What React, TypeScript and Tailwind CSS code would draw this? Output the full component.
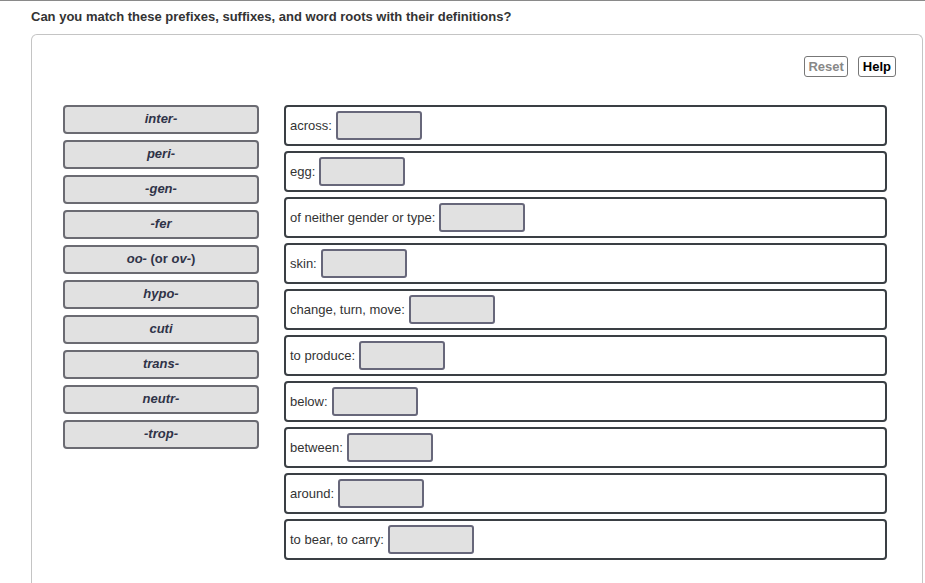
import React from 'react'

const TERMS: React.ReactNode[] = [
  <i>inter-</i>,
  <i>peri-</i>,
  <i>-gen-</i>,
  <i>-fer</i>,
  <>
    <i>oo-</i> (or <i>ov-</i>)
  </>,
  <i>hypo-</i>,
  <i>cuti</i>,
  <i>trans-</i>,
  <i>neutr-</i>,
  <i>-trop-</i>,
]

const DEFS = [
  'across:',
  'egg:',
  'of neither gender or type:',
  'skin:',
  'change, turn, move:',
  'to produce:',
  'below:',
  'between:',
  'around:',
  'to bear, to carry:',
]

export default function App() {
  return (
    <div
      className="min-h-[583px] bg-white border-t border-[#8a8a8a] text-[#333]"
      style={{ fontFamily: '"Liberation Sans", Arial, sans-serif' }}
    >
      <h1 className="pl-[31px] pt-[8px] text-[13px] font-bold leading-[16px]">
        Can you match these prefixes, suffixes, and word roots with their definitions?
      </h1>

      <div className="ml-[31px] mr-[2px] mt-[9px] h-[560px] rounded-tl-[6px] rounded-tr-[6px] border border-b-0 border-[#c4c4c4]">
        {/* toolbar */}
        <div className="flex justify-end gap-[10px] pt-[21px] pr-[26px]">
          <button className="h-[21px] px-[3px] rounded-[3px] border border-[#777] text-[13px] font-bold text-[#888] leading-[17px]">
            Reset
          </button>
          <button className="h-[21px] px-[4px] rounded-[3px] border border-[#777] text-[13px] font-bold text-black leading-[17px]">
            Help
          </button>
        </div>

        <div className="flex gap-[25px] pl-[31px] pt-[28px]">
          {/* draggable terms */}
          <div className="flex w-[196px] flex-col gap-[6px]">
            {TERMS.map((t, i) => (
              <div
                key={i}
                className="flex h-[29px] items-center justify-center rounded-[4px] border-2 border-[#6b6b72] bg-[#e1e1e1] text-[13px] font-bold text-[#2f3348] pb-[1px]"
              >
                <span>{t}</span>
              </div>
            ))}
          </div>

          {/* drop targets */}
          <div className="flex w-[603px] flex-col gap-[5px]">
            {DEFS.map(d => (
              <div
                key={d}
                className="flex h-[41px] items-center gap-[4px] rounded-[4px] border-2 border-[#3a3f44] pl-[4px]"
              >
                <span className="text-[13px] text-[#333]">{d}</span>
                <div className="h-[29px] w-[86px] rounded-[3px] border-2 border-[#67677a] bg-[#e1e1e1]" />
              </div>
            ))}
          </div>
        </div>
      </div>
    </div>
  )
}
